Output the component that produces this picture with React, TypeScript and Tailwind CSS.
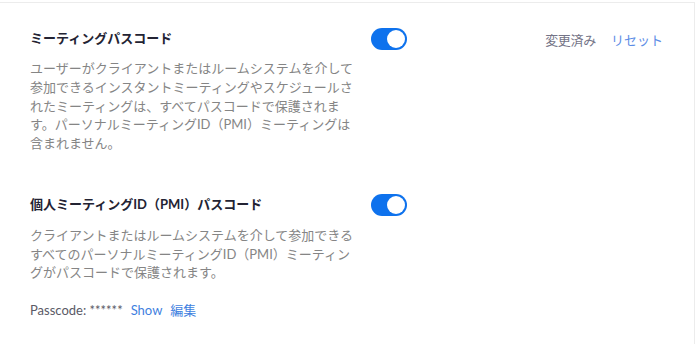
import React from "react";

function Toggle() {
  return (
    <div className="w-[36px] h-[22px] rounded-full bg-[#0e72ed] flex items-center justify-end px-[2px]">
      <div className="w-[18px] h-[18px] rounded-full bg-white" />
    </div>
  );
}

export default function App() {
  return (
    <div
      className="w-[696px] h-[344px] bg-white overflow-hidden"
      style={{ fontFamily: 'Lato, "Noto Sans CJK JP", sans-serif' }}
    >
      <div className="mt-[2px] w-[695px] h-[342px] border-t border-r border-[#ececec]">
        {/* meeting passcode */}
        <div className="flex pl-[30px] pt-[23px]">
          <div className="w-[341px]">
            <div className="text-[13px] font-bold text-[#232333] leading-[20px] mt-[2px]">
              ミーティングパスコード
            </div>
            <p className="mt-[11px] w-[325px] text-[13px] leading-[18.75px] text-[#858585]">
              ユーザーがクライアントまたはルームシステムを介して参加できるインスタントミーティングやスケジュールされたミーティングは、すべてパスコードで保護されます。パーソナルミーティングID（PMI）ミーティングは含まれません。
            </p>
          </div>
          <div className="pt-[2px]">
            <Toggle />
          </div>
          <div className="ml-auto mr-[31px] flex gap-[15px] text-[13px] leading-[20px] pt-[4px]">
            <span className="text-[#747487] tracking-[-0.3px]">変更済み</span>
            <span className="text-[#5c8de6]">リセット</span>
          </div>
        </div>

        {/* PMI passcode */}
        <div className="flex pl-[30px] pt-[41px]">
          <div className="w-[341px]">
            <div className="text-[13px] font-bold text-[#232333] leading-[20px]">
              個人ミーティングID（PMI）パスコード
            </div>
            <p className="mt-[12px] w-[325px] text-[13px] leading-[18.75px] text-[#858585]">
              クライアントまたはルームシステムを介して参加できるすべてのパーソナルミーティングID（PMI）ミーティングがパスコードで保護されます。
            </p>
            <div className="mt-[18px] flex items-center gap-[8px] text-[13px] leading-[20px]">
              <span className="text-[#5a5a66]">Passcode: ******</span>
              <span className="text-[#3f7fe0]">Show</span>
              <span className="text-[#3f7fe0]">編集</span>
            </div>
          </div>
          <div>
            <Toggle />
          </div>
        </div>
      </div>
    </div>
  );
}
